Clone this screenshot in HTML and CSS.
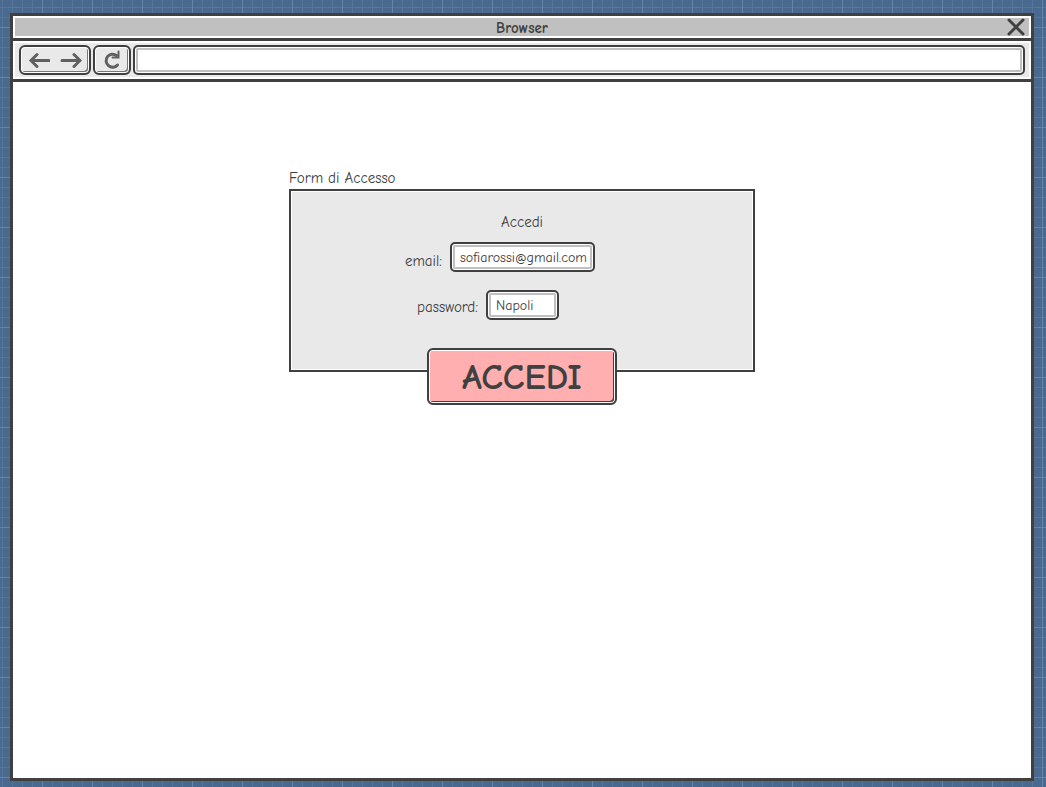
FILE: index.html
```
<!DOCTYPE html>
<html lang="it">
<head>
<meta charset="utf-8">
<meta name="viewport" content="width=device-width, initial-scale=1">
<title>Form di Accesso</title>
<link rel="stylesheet" href="styles.css">
</head>
<body>
<div class="window">
  <header class="titlebar">
    <span class="title">Browser</span>
    <button class="close" type="button" aria-label="Chiudi">
      <svg width="18" height="18" viewBox="0 0 18 18"><path d="M2 2 16 16M16 2 2 16"/></svg>
    </button>
  </header>
  <nav class="toolbar">
    <div class="key history">
      <button type="button" aria-label="Indietro">
        <svg width="22" height="16" viewBox="0 0 22 16"><path d="M21 8.500H3M9 2.500l-6 6 6 6"/></svg>
      </button>
      <button type="button" aria-label="Avanti">
        <svg width="22" height="16" viewBox="0 0 22 16"><path d="M2 8.500h18M14 2.500l6 6-6 6"/></svg>
      </button>
    </div>
    <button class="key reload" type="button" aria-label="Ricarica">
      <svg width="18" height="20" viewBox="0 0 18 20"><path d="M13.500 5.500A6.500 6.500 0 1 0 14.500 15"/><path class="tip" d="M15.500 1.500V7.500H9.500"/></svg>
    </button>
    <input class="field address" type="text" aria-label="Indirizzo">
  </nav>
  <main class="page">
    <form class="login">
      <h1 class="caption">Form di Accesso</h1>
      <div class="panel">
        <h2 class="heading">Accedi</h2>
        <div class="row">
          <label for="email">email:</label>
          <input class="field email" id="email" type="text" value="sofiarossi@gmail.com">
        </div>
        <div class="row">
          <label for="password">password:</label>
          <input class="field password" id="password" type="text" value="Napoli">
        </div>
        <button class="submit" type="button">ACCEDI</button>
      </div>
    </form>
  </main>
</div>
</body>
</html>
```
FILE: styles.css
```
:root {
  --ink: #404040;
  --panel: #e9e9e9;
  --shade: #c0c0c0;
}

* {
  box-sizing: border-box;
}

body {
  display: flex;
  min-height: 100vh;
  margin: 0;
  padding: 13px 12px 6px 10px;
  color: var(--ink);
  font: 15px/20px "Comic Sans MS", "Comic Neue", "Open Sans", sans-serif;
  background-color: #49698f;
  background-image:
    linear-gradient(90deg, #6583ab 1px, transparent 1px),
    linear-gradient(#6583ab 1px, transparent 1px),
    linear-gradient(90deg, #56759d 1px, transparent 1px),
    linear-gradient(#56759d 1px, transparent 1px);
  background-size: 50px 50px, 50px 50px, 10px 10px, 10px 10px;
  background-position: 42px 27px, 42px 27px, 2px 7px, 2px 7px;
}

button,
input {
  margin: 0;
  color: inherit;
  font: inherit;
}

button {
  padding: 0;
  border: 0;
  background: none;
}

svg {
  display: block;
  fill: none;
  stroke: #606060;
  stroke-width: 3;
  stroke-linecap: round;
}

.window {
  display: flex;
  flex: 1;
  flex-direction: column;
  border: 3px solid var(--ink);
  background: #fff;
}

.titlebar {
  display: grid;
  grid-template-columns: 1fr auto 1fr;
  align-items: center;
  height: 25px;
  padding: 0 6px;
  border-bottom: 3px solid var(--ink);
  background: var(--shade);
  box-shadow: inset 0 0 0 2px #fff;
}

.title {
  grid-column: 2;
  padding-top: 2px;
  font-weight: 700;
}

.close {
  justify-self: end;
}

.close svg {
  stroke: var(--ink);
}

.toolbar {
  display: flex;
  gap: 2px;
  height: 41px;
  padding: 4px 6px;
  border-bottom: 3px solid var(--ink);
  background: var(--panel);
  box-shadow: inset 0 0 0 2px #fff;
}

.key {
  display: flex;
  align-items: center;
  justify-content: center;
  height: 30px;
  border: 2px solid var(--ink);
  border-radius: 6px;
  background: var(--panel);
  box-shadow: inset 0 0 0 1px #fff, inset -2px -2px #777;
}

.history {
  gap: 10px;
  width: 72px;
}

.reload {
  width: 38px;
}

.reload .tip {
  stroke-width: 2;
}

.field {
  height: 30px;
  border: 2px solid var(--ink);
  border-radius: 5px;
  outline: 0;
  background: #fff;
  box-shadow: inset 0 0 0 1px #fff, inset 0 0 0 3px var(--shade);
}

.address {
  flex: 1;
  min-width: 0;
  padding: 0 8px;
}

.page {
  flex: 1;
  padding: 86px 16px;
}

.login {
  max-width: 466px;
  margin: 0 auto;
}

.caption,
.heading {
  margin: 0;
  font-size: 15px;
  font-weight: 400;
}

.caption {
  margin-bottom: 1px;
}

.panel {
  display: flex;
  flex-direction: column;
  align-items: center;
  height: 183px;
  padding-top: 21px;
  border: 2px solid var(--ink);
  background: var(--panel);
  box-shadow: inset 0 0 0 1px #fff;
}

.heading {
  margin-bottom: 10px;
}

.row {
  display: flex;
  align-items: center;
  align-self: stretch;
  margin-bottom: 18px;
}

.row label {
  padding-right: 8px;
  text-align: right;
}

.row label[for="email"] {
  width: 159px;
  padding-top: 8px;
}

.row label[for="password"] {
  width: 195px;
  padding-top: 4px;
}

.email,
.password {
  padding: 0 4px 0 8px;
  font-size: 14px;
}

.email {
  width: 145px;
}

.password {
  width: 73px;
}

.submit {
  flex: none;
  width: 190px;
  height: 57px;
  padding-top: 2px;
  margin-top: 10px;
  border: 2px solid var(--ink);
  border-radius: 6px;
  background: #ffafaf;
  box-shadow: inset 0 0 0 1px #fff, inset -2px -2px var(--ink);
  font-size: 36px;
  font-weight: 700;
  line-height: 40px;
}
```
